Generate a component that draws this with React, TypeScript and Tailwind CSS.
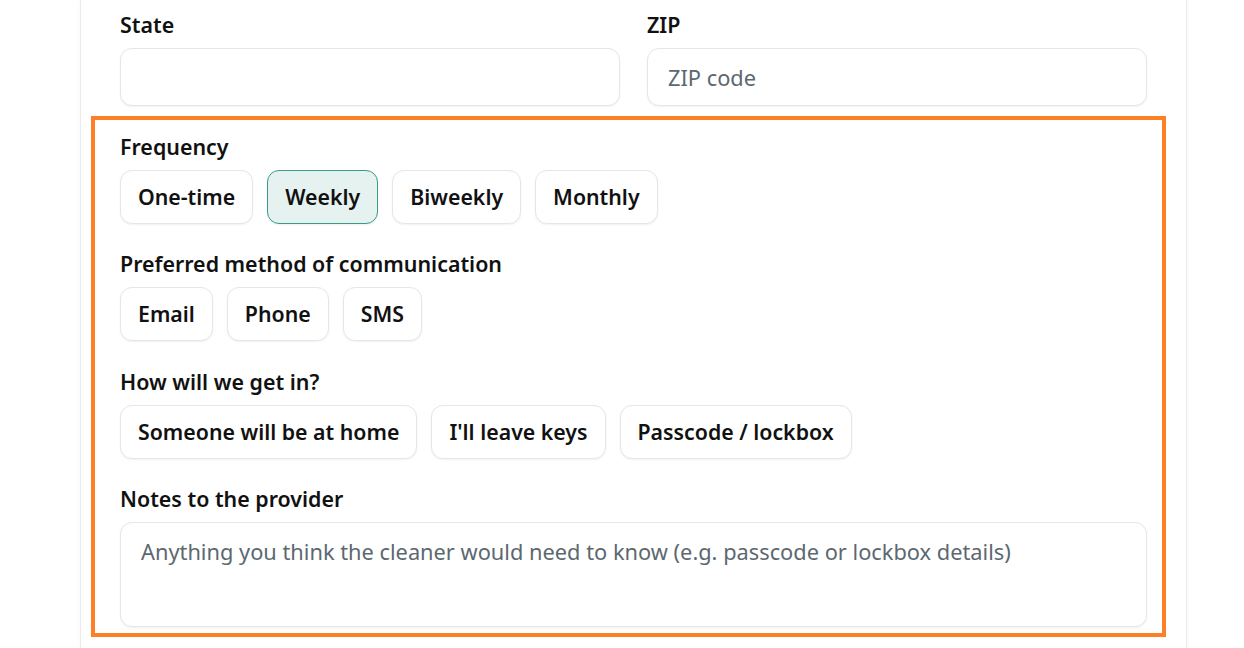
import React from "react";

const font = { fontFamily: '"Noto Sans", "Open Sans", sans-serif' };

interface ChoiceProps {
  label: string;
  selected?: boolean;
}

const Choice = ({ label, selected }: ChoiceProps) => {
  return (
    <button
      type="button"
      className={
        selected
          ? "h-[54px] px-[17px] rounded-xl border border-[#3a9a88] bg-[#e6f2ef] text-[21.3px] font-semibold text-[#111] shadow-[0_1px_2px_rgba(0,0,0,0.06)]"
          : "h-[54px] px-[17px] rounded-xl border border-[#e6e6e6] bg-white text-[21.3px] font-semibold text-[#111] shadow-[0_1px_2px_rgba(0,0,0,0.06)]"
      }
    >
      {label}
    </button>
  );
};

const Label = ({ children }: { children: React.ReactNode }) => (
  <div className="text-[21.4px] leading-[28px] font-semibold text-[#111] mb-[9px]">
    {children}
  </div>
);

const App = () => {
  return (
    <div className="w-[1244px] h-[648px] bg-white overflow-hidden" style={font}>
      <div className="ml-[80px] w-[1107px] h-[648px] bg-white border-x border-[#ebebeb] shadow-[0_0_4px_rgba(0,0,0,0.04)] px-[39px] pt-[11px]">
        <div className="grid grid-cols-2 gap-[27px]">
          <div>
            <Label>State</Label>
            <input
              className="w-full h-[58px] rounded-xl border border-[#e6e6e6] bg-white px-5 text-[21.8px] outline-none shadow-[0_1px_2px_rgba(0,0,0,0.06)]"
              style={font}
            />
          </div>
          <div>
            <Label>ZIP</Label>
            <input
              placeholder="ZIP code"
              className="w-full h-[58px] rounded-xl border border-[#e6e6e6] bg-white px-5 text-[21.8px] outline-none placeholder:text-[#5c6870] shadow-[0_1px_2px_rgba(0,0,0,0.06)]"
              style={font}
            />
          </div>
        </div>

        <div className="mt-[10px] ml-[-29px] mr-[-19px] border-4 border-[#ff7f27] pl-[25px] pr-[15px] pt-[13px] pb-[6px]">
          <Label>Frequency</Label>
          <div className="flex gap-[14px]">
            <Choice label="One-time" />
            <Choice label="Weekly" selected />
            <Choice label="Biweekly" />
            <Choice label="Monthly" />
          </div>

          <div className="mt-[26px]">
            <Label>Preferred method of communication</Label>
            <div className="flex gap-[14px]">
              <Choice label="Email" />
              <Choice label="Phone" />
              <Choice label="SMS" />
            </div>
          </div>

          <div className="mt-[27px]">
            <Label>How will we get in?</Label>
            <div className="flex gap-[14px]">
              <Choice label="Someone will be at home" />
              <Choice label="I'll leave keys" />
              <Choice label="Passcode / lockbox" />
            </div>
          </div>

          <div className="mt-[26px]">
            <Label>Notes to the provider</Label>
            <textarea
              placeholder="Anything you think the cleaner would need to know (e.g. passcode or lockbox details)"
              className="block w-full h-[105px] resize-none rounded-xl border border-[#e6e6e6] bg-white px-5 py-[15px] text-[21.8px] leading-[28px] outline-none placeholder:text-[#5c6870] shadow-[0_1px_2px_rgba(0,0,0,0.06)]"
              style={font}
            />
          </div>
        </div>
      </div>
    </div>
  );
};

export default App;
